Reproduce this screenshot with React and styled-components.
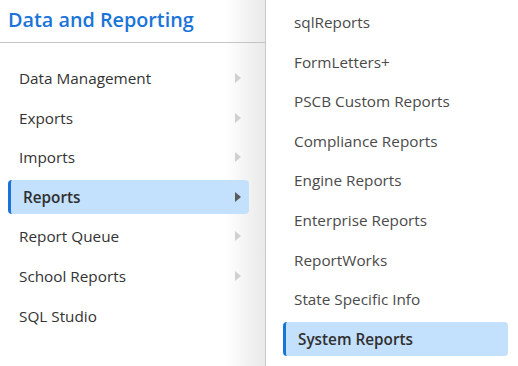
import React from 'react';
import styled, { createGlobalStyle } from 'styled-components';

const GlobalStyle = createGlobalStyle`
  html, body {
    margin: 0;
    padding: 0;
    background: #fff;
    font-family: "Open Sans", "Liberation Sans", sans-serif;
  }
`;

const Page = styled.div`
  display: flex;
  width: 518px;
  height: 366px;
  overflow: hidden;
`;

const SidePanel = styled.div`
  width: 265px;
  flex: none;
  border-right: 1px solid #c9c9c9;
  background: linear-gradient(to right, #fff 0, #fff 225px, #e9e9e9 100%);
  display: flex;
  flex-direction: column;
`;

const Header = styled.h1`
  margin: 0;
  height: 43px;
  box-sizing: border-box;
  padding: 6px 0 0 8px;
  font-size: 19.8px;
  font-weight: 600;
  color: #1a74d8;
  border-bottom: 1px solid #c4c4c4;
`;

const List = styled.ul`
  list-style: none;
  margin: 0;
  padding: ${p => p.$top}px 0 0;
  display: flex;
  flex-direction: column;
  gap: 5.6px;
`;

const Item = styled.li`
  height: 34px;
  box-sizing: border-box;
  margin: 0 ${p => p.$right}px 0 ${p => p.$left}px;
  display: flex;
  align-items: center;
  justify-content: space-between;
  padding: 0 8px 0 ${p => (p.$active ? 12 : 11)}px;
  font-size: 15.3px;
  color: ${p => (p.$active ? '#2f2f2f' : p.$tone)};
  font-weight: ${p => (p.$active ? 600 : 400)};
  border-radius: 4px;
  background: ${p => (p.$active ? '#c3e0fc' : 'transparent')};
  border-left: ${p => (p.$active ? '3px solid #1a74d8' : '0')};
`;

const Arrow = styled.span`
  width: 0;
  height: 0;
  border-top: 5px solid transparent;
  border-bottom: 5px solid transparent;
  border-left: 6px solid ${p => (p.$active ? '#5a5a5a' : '#d0d0d0')};
`;

const SubPanel = styled.div`
  flex: 1;
  background: #fff;
`;

const leftItems = [
  { label: 'Data Management', sub: true },
  { label: 'Exports', sub: true },
  { label: 'Imports', sub: true },
  { label: 'Reports', sub: true, active: true },
  { label: 'Report Queue', sub: true },
  { label: 'School Reports', sub: true },
  { label: 'SQL Studio' }
];

const rightItems = [
  'sqlReports',
  'FormLetters+',
  'PSCB Custom Reports',
  'Compliance Reports',
  'Engine Reports',
  'Enterprise Reports',
  'ReportWorks',
  'State Specific Info',
  'System Reports'
];

export default function App() {
  return (
    <Page>
      <GlobalStyle />
      <SidePanel>
        <Header>Data and Reporting</Header>
        <List $top={18}>
          {leftItems.map(item => (
            <Item
              key={item.label}
              $active={item.active}
              $left={8}
              $right={16}
              $tone="#333"
            >
              {item.label}
              {item.sub && <Arrow $active={item.active} />}
            </Item>
          ))}
        </List>
      </SidePanel>
      <SubPanel>
        <List $top={5}>
          {rightItems.map(label => (
            <Item
              key={label}
              $active={label === 'System Reports'}
              $left={17}
              $right={10}
              $tone="#4a4a4a"
            >
              {label}
            </Item>
          ))}
        </List>
      </SubPanel>
    </Page>
  );
}
